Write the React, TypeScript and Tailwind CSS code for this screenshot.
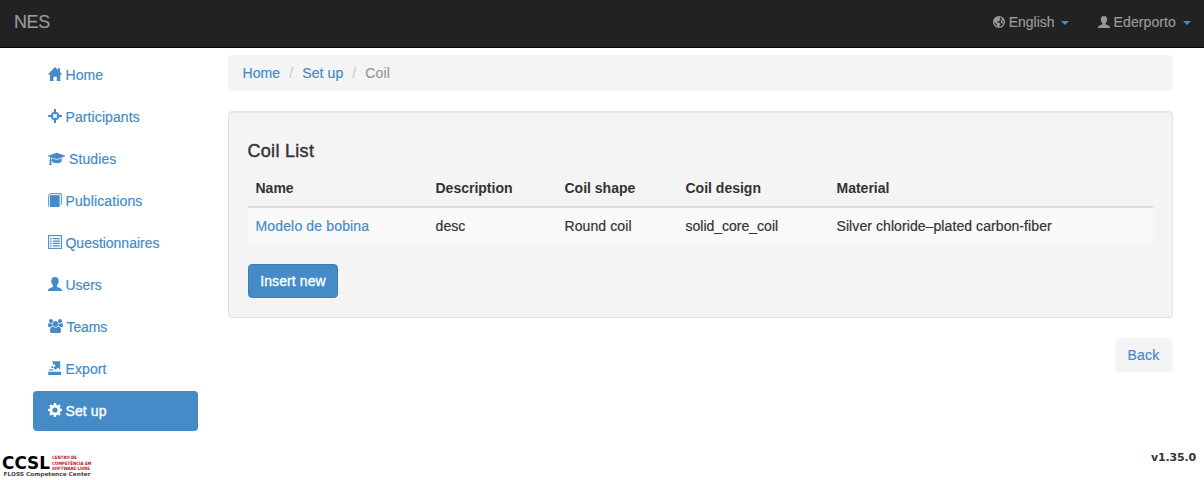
import type { ReactNode } from "react";

const capPath =
  "M1774 836l18 316q4 69-82 128t-235 93.5-323 34.5-323-34.5-235-93.5-82-128l18-316 574 181q22 7 48 7t48-7zm530-324q0 23-22 31l-1120 352q-4 1-10 1t-10-1l-652-206q-43 34-71 111.5t-34 178.5q63 36 63 109 0 69-58 107l58 433q2 14-8 25-9 11-24 11h-192q-15 0-24-11-10-11-8-25l58-433q-58-38-58-107 0-73 65-111 11-207 98-330l-333-104q-22-8-22-31t22-31l1120-352q4-1 10-1t10 1l1120 352q22 8 22 31z";
const groupPath =
  "M593 896q-162 5-265 128h-134q-82 0-138-40.5t-56-118.5q0-353 124-353 6 0 43.5 21t97.5 42.5 119 21.5q67 0 133-23-5 37-5 66 0 139 81 256zm1071 637q0 120-73 189.5t-194 69.5h-874q-121 0-194-69.5t-73-189.5q0-53 3.5-103.5t14-109 26.5-108.5 43-97.5 62-81 85.5-53.5 111.5-20q10 0 43 21.5t73 48 107 48 135 21.5 135-21.5 107-48 73-48 43-21.5q61 0 111.5 20t85.5 53.5 62 81 43 97.5 26.5 108.5 14 109 3.5 103.5zm-1024-1277q0 106-75 181t-181 75-181-75-75-181 75-181 181-75 181 75 75 181zm704 384q0 159-112.5 271.5t-271.5 112.5-271.5-112.5-112.5-271.5 112.5-271.5 271.5-112.5 271.5 112.5 112.5 271.5zm576 225q0 78-56 118.5t-138 40.5h-134q-103-123-265-128 81-117 81-256 0-29-5-66 66 23 133 23 59 0 119-21.5t97.5-42.5 43.5-21q124 0 124 353zm-128-609q0 106-75 181t-181 75-181-75-75-181 75-181 181-75 181 75 75 181z";

function Glyph({ children }: { children: ReactNode }) {
  return (
    <svg viewBox="0 0 14 14" className="h-3.5 w-3.5 shrink-0 overflow-visible" fill="currentColor">
      {children}
    </svg>
  );
}

const HomeIcon = () => (
  <Glyph>
    <path d="M7 0 10 2.900V1.200h2V5L14.400 7.600H12.300V14H8.800V9.800H5.500V14H2V7.600H-.3L7 0Z" />
  </Glyph>
);
const TargetIcon = () => (
  <Glyph>
    <path d="M6 0h2v5.200H6zM6 8.800h2V14H6zM0 6h5.200v2H0zM8.800 6H14v2H8.800z" />
    <path d="M7 2.500 11.500 7 7 11.500 2.500 7Z" fill="none" stroke="currentColor" strokeWidth="1.600" strokeLinejoin="round" />
    <circle cx="7" cy="7" r="3.900" fill="none" stroke="currentColor" strokeWidth=".9" />
  </Glyph>
);
const BookIcon = () => (
  <Glyph>
    <path d="M2 2.200h9.600V14H2Z" />
    <path d="M.7 13.500V2.200L2.200.7h11v10.600l-1 1" fill="none" stroke="currentColor" strokeWidth="1" />
  </Glyph>
);
const ListIcon = () => (
  <Glyph>
    <rect x=".6" y=".6" width="12.800" height="12.800" fill="none" stroke="currentColor" strokeWidth="1.100" />
    <path d="M2.200 3h1.600v1.300H2.200zM5 3h6.800v1.300H5zM2.200 5.400h1.600v1.300H2.200zM5 5.400h6.800v1.300H5zM2.200 7.800h1.600v1.300H2.200zM5 7.800h6.800v1.300H5zM2.200 10.200h1.600v1.300H2.200zM5 10.200h6.800v1.300H5z" />
  </Glyph>
);
const UserIcon = () => (
  <Glyph>
    <path d="M7 0C9.500 0 10.700 1.500 10.700 3.700C10.700 5.800 10.100 7.200 9 8.300C8.600 8.800 8.700 9.600 9.400 10L12.600 11.500C13.500 11.900 14 12.500 14 14H0C0 12.500.5 11.900 1.400 11.500L4.600 10C5.300 9.600 5.400 8.800 5 8.300C3.900 7.200 3.300 5.800 3.300 3.700C3.300 1.500 4.500 0 7 0Z" />
  </Glyph>
);
const ExportIcon = () => (
  <Glyph>
    <path d="M4 .3H12.200V8.800L9.900 6.500 7.600 8.900 5.400 6.700 7.700 4.400 6.500 3.200 5 4V1.500Z" />
    <path d="M3.400 5.300h1.900v1.800H3.400zM1.600 8.300h2.600l1.400 1.300H1ZM.2 10.800h12.800V14H.2Z" />
  </Glyph>
);
const CogIcon = () => (
  <Glyph>
    <path
      fillRule="evenodd"
      d="M5.900 0h2.200l.3 1.900 1.200.5 1.500-1.100 1.600 1.600-1.100 1.500.5 1.200 1.900.3v2.200l-1.900.3-.5 1.200 1.100 1.500-1.600 1.600-1.500-1.100-1.200.5-.3 1.900H5.900l-.3-1.900-1.200-.5-1.500 1.100-1.600-1.600 1.100-1.500-.5-1.200L0 8.100V5.900l1.900-.3.500-1.200L1.300 2.900l1.600-1.600 1.500 1.100 1.200-.5ZM7 4.400a2.600 2.600 0 1 0 0 5.200 2.600 2.600 0 0 0 0-5.200Z"
    />
  </Glyph>
);
const GlobeIcon = () => (
  <svg viewBox="0 0 14 14" className="h-3 w-3 shrink-0" fill="none">
    <circle cx="7" cy="7" r="6.200" stroke="currentColor" strokeWidth="1.600" />
    <path d="M1 3.500 4.500 .8 8.200 1.100 7.600 3 8.800 4 6.500 6.300 4.200 6.500 5.300 7.600 8.300 8.300 8.600 10 6.600 13 4.600 12 4.400 9.700.8 6.500Z" fill="currentColor" />
    <path d="m9.600 2.500 1.800.4 1.800 2.900-1.900-.9-1 1.100 1.200 1.300-.4 2.400-1.700-1.900L9 5.700l1.400-1.600Z" fill="currentColor" />
  </svg>
);
const CapIcon = () => (
  <svg viewBox="0 0 2304 1792" className="mt-px h-3.5 w-[17.500px] shrink-0" preserveAspectRatio="none" fill="currentColor">
    <path d={capPath} stroke="currentColor" strokeWidth="50" />
  </svg>
);
const GroupIcon = () => (
  <svg viewBox="0 0 1920 1792" className="h-3.5 w-[15px] shrink-0" fill="currentColor">
    <path d={groupPath} />
  </svg>
);
const Caret = () => <span className="mt-0.5 border-x-4 border-t-4 border-x-transparent border-t-[#458bc8]" />;

const menu = [
  { label: "Home", icon: <HomeIcon />, tracking: "tracking-[0.05px]" },
  { label: "Participants", icon: <TargetIcon />, tracking: "tracking-[0.1px]" },
  { label: "Studies", icon: <CapIcon />, tracking: "tracking-[0.1px]" },
  { label: "Publications", icon: <BookIcon />, tracking: "tracking-[0.12px]" },
  { label: "Questionnaires", icon: <ListIcon />, tracking: "tracking-[-0.02px]" },
  { label: "Users", icon: <UserIcon />, tracking: "tracking-[-0.05px]" },
  { label: "Teams", icon: <GroupIcon />, tracking: "tracking-[-0.1px]" },
  { label: "Export", icon: <ExportIcon />, tracking: "tracking-[0.1px]" },
  { label: "Set up", icon: <CogIcon />, active: true, tracking: "tracking-[0.1px]" },
];

function Logo() {
  return (
    <svg width="96" height="26" viewBox="0 0 96 26" aria-label="CCSL" className="font-['DejaVu_Sans'] font-bold">
      <text x="2" y="16" fontSize="17" fill="#000" textLength="48" lengthAdjust="spacingAndGlyphs">CCSL</text>
      <g fill="#b5121b" fontSize="4.500">
        <text x="52" y="6" textLength="25" lengthAdjust="spacingAndGlyphs">CENTRO DE</text>
        <text x="52" y="11.500" textLength="39.500" lengthAdjust="spacingAndGlyphs">COMPETÊNCIA EM</text>
        <text x="52" y="17" textLength="38" lengthAdjust="spacingAndGlyphs">SOFTWARE LIVRE</text>
      </g>
      <text x="3.500" y="22.600" fontSize="5.500" fill="#444" textLength="87" lengthAdjust="spacingAndGlyphs">FLOSS Competence Center</text>
    </svg>
  );
}

export default function App() {
  return (
    <div className="flex h-[480px] w-[1204px] flex-col overflow-hidden bg-white font-['Liberation_Sans',sans-serif] text-sm leading-5 text-[#333] [-webkit-text-stroke:0.2px]">
      <header className="flex h-12 shrink-0 items-center justify-between border-b border-[#080808] bg-[#222] pr-[13px] pb-[3px] pl-3.5 text-[#999]">
        <span className="text-lg leading-5 tracking-[-0.4px]">NES</span>
        <div className="flex items-center">
          <a className="flex items-center"><GlobeIcon /><span className="ml-1">English</span><span className="ml-1.5 flex"><Caret /></span></a>
          <a className="ml-[29px] flex items-center">
            <svg viewBox="0 0 14 14" className="h-3 w-3 overflow-visible"><UserIcon /></svg>
            <span className="ml-1 tracking-[0.1px]">Ederporto</span><span className="ml-[7px] flex"><Caret /></span>
          </a>
        </div>
      </header>
      <div className="flex h-[383px] shrink-0 pt-[7px]">
        <nav className="ml-[33px] flex w-[165px] flex-col gap-0.5">
          {menu.map((item) => (
            <a
              key={item.label}
              className={`flex h-10 shrink-0 items-center gap-1 rounded pl-[14.500px] ${item.active ? "bg-[#458bc8] text-white [-webkit-text-stroke:0.35px]" : "text-[#458bc8]"}`}
            >
              <span className="-mt-0.5">{item.icon}</span>
              <span className={item.tracking}>{item.label}</span>
            </a>
          ))}
        </nav>
        <main className="ml-[30px] flex w-[945px] flex-col">
          <div className="flex h-9 shrink-0 items-center rounded bg-[#f4f4f4] pl-[14.500px] tracking-[0.1px]">
            <a className="text-[#458bc8]">Home</a>
            <span className="w-[22px] text-center text-[#ccc]">/</span>
            <a className="text-[#458bc8]">Set up</a>
            <span className="w-[22px] text-center text-[#ccc]">/</span>
            <span className="text-[#999]">Coil</span>
          </div>
          <section className="mt-5 flex h-[207px] shrink-0 flex-col items-start rounded border border-[#e3e3e3] bg-[#f4f4f4] px-[19px] pt-[29px] shadow-[inset_0_1px_1px_rgba(0,0,0,0.05)]">
            <h4 className="-ml-[0.5px] text-lg leading-5 tracking-[0.3px] [-webkit-text-stroke:0.4px]">Coil List</h4>
            <table className="mt-2 w-[905px] table-fixed border-collapse">
              <colgroup>
                <col className="w-[180px]" /><col className="w-[129px]" /><col className="w-[121px]" /><col className="w-[151px]" /><col />
              </colgroup>
              <thead>
                <tr className="h-[38px] border-b-2 border-[#ddd] text-left [-webkit-text-stroke:0px]">
                  {["Name", "Description", "Coil shape", "Coil design", "Material"].map((t) => (
                    <th key={t} className="pr-2 pl-[7.500px] font-bold">{t}</th>
                  ))}
                </tr>
              </thead>
              <tbody>
                <tr className="h-[37px] bg-[#f9f9f9]">
                  <td className="pr-2 pl-[7.500px] tracking-[0.15px] text-[#458bc8]">Modelo de bobina</td>
                  <td className="pr-2 pl-[7.500px] tracking-[0.1px]">desc</td>
                  <td className="pr-2 pl-[7.500px] tracking-[0.1px]">Round coil</td>
                  <td className="pr-2 pl-[7.500px]">solid_core_coil</td>
                  <td className="pr-2 pl-[7.500px] tracking-[0.08px]">Silver chloride–plated carbon-fiber</td>
                </tr>
              </tbody>
            </table>
            <button className="mt-5 h-[34px] w-[90px] rounded border border-[#3a7fba] bg-[#458bc8] tracking-[0.1px] text-white [-webkit-text-stroke:0.35px]">Insert new</button>
          </section>
          <button className="mt-5 h-[34px] w-[58px] shrink-0 self-end rounded bg-[#f4f4f4] pr-px tracking-[0.2px] text-[#458bc8]">Back</button>
        </main>
      </div>
      <footer className="flex items-start justify-between pt-[22px] pr-2 [-webkit-text-stroke:0px]">
        <Logo />
        <span className="-mt-0.5 font-['DejaVu_Sans'] text-[11px] leading-[14px] font-bold tracking-[-0.15px]">v1.35.0</span>
      </footer>
    </div>
  );
}
